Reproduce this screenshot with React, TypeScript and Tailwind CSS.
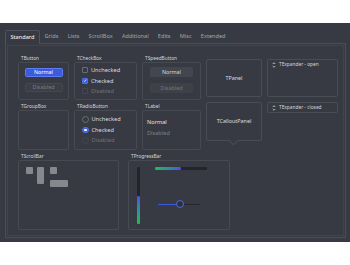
import type { ReactNode } from "react";

const tabs = ["Standard", "Grids", "Lists", "ScrollBox", "Additional", "Edits", "Misc", "Extended"];

function Group({ label, h, w, children }: { label: string; h: number; w: number; children?: ReactNode }) {
  return (
    <div style={{ width: w }} className="flex flex-col">
      <div className="h-[7px] pl-[3px] text-[4.8px] leading-[6px] text-[#d6d7da]">{label}</div>
      <div style={{ height: h }} className="rounded-[2px] border border-[#474a52]">
        {children}
      </div>
    </div>
  );
}

function Check({ label, checked, disabled }: { label: string; checked?: boolean; disabled?: boolean }) {
  return (
    <div className="flex h-[10.5px] items-center gap-[3px]">
      <span
        className={`flex h-[6px] w-[6px] items-center justify-center rounded-[1px] border ${
          checked ? "border-[#4f6fe6] bg-[#3d5fe0]" : disabled ? "border-[#44474e]" : "border-[#6a6d74]"
        }`}
      >
        {checked && (
          <svg width="5" height="5" viewBox="0 0 10 10">
            <path d="M2 5.5 L4.2 7.5 L8 2.5" stroke="white" strokeWidth="1.8" fill="none" />
          </svg>
        )}
      </span>
      <span className={`text-[5.6px] ${disabled ? "text-[#6f7278]" : "text-[#dcdde0]"}`}>{label}</span>
    </div>
  );
}

function Radio({ label, checked, disabled }: { label: string; checked?: boolean; disabled?: boolean }) {
  return (
    <div className="flex h-[10.5px] items-center gap-[3px]">
      <span
        className={`flex h-[6.5px] w-[6.5px] items-center justify-center rounded-full border ${
          checked ? "border-[#4f6fe6] bg-[#3d5fe0]" : disabled ? "border-[#44474e]" : "border-[#6a6d74]"
        }`}
      >
        {checked && <span className="h-[2.5px] w-[2.5px] rounded-full bg-white" />}
      </span>
      <span className={`text-[5.6px] ${disabled ? "text-[#6f7278]" : "text-[#dcdde0]"}`}>{label}</span>
    </div>
  );
}

// up/down chevrons used as expander toggle
function UpDown() {
  return (
    <svg width="4" height="6" viewBox="0 0 4 6" className="shrink-0">
      <path d="M0.7 2 L2 0.7 L3.3 2 M0.7 4 L2 5.3 L3.3 4" stroke="#d6d7da" strokeWidth="0.8" fill="none" />
    </svg>
  );
}

function Expander({ label, h }: { label: string; h: number }) {
  return (
    <div style={{ height: h }} className="rounded-[2px] border border-[#4a4d55] pl-[4px]">
      <div className="flex h-[9px] items-center gap-[3px] text-[4.8px] text-[#d6d7da]">
        <UpDown />
        <span>{label}</span>
      </div>
    </div>
  );
}

export default function App() {
  return (
    <div
      className="h-[265px] w-[350px] bg-white pt-[23px]"
      style={{ fontFamily: '"Noto Sans", "Open Sans", sans-serif' }}
    >
      <div className="h-[219px] bg-[#373a43] px-[5px] pt-[6px]">
        <div className="flex h-[14px] items-end">
          {tabs.map((t, i) =>
            i === 0 ? (
              <div
                key={t}
                className="relative z-10 -mb-px flex h-[14px] items-center rounded-t-[2px] border border-b-0 border-[#50535b] bg-[#373a43] px-[4.5px] text-[5.6px] text-white"
              >
                {t}
              </div>
            ) : (
              <div key={t} className="flex h-[13px] items-center px-[4.6px] text-[5.6px] text-[#a3a6ab]">
                {t}
              </div>
            )
          )}
        </div>
        <div className="h-[195px] w-[341px] border border-[#4b4e56] p-[1px]">
          <div className="h-full border border-[#41444c] pl-[10px] pt-[9px]">
            <div className="flex gap-[5px]">
              <div className="grid grid-cols-[51px_63px_59px] gap-x-[5px] gap-y-[3px]">
                <Group label="TButton" w={51} h={38}>
                  <div className="flex flex-col items-center pt-[5px]">
                    <div className="flex h-[9px] w-[38px] items-center justify-center rounded-[1.5px] border border-[#5d7cf0] bg-[#3b5bdc] text-[5.4px] text-white">
                      Normal
                    </div>
                    <div className="mt-[6px] flex h-[9px] w-[38px] items-center justify-center rounded-[1.5px] border border-[#45484f] bg-[#3c3f47] text-[5.4px] text-[#7a7d83]">
                      Disabled
                    </div>
                  </div>
                </Group>
                <Group label="TCheckBox" w={63} h={38}>
                  <div className="flex flex-col pl-[7px] pt-[2px]">
                    <Check label="Unchecked" />
                    <Check label="Checked" checked />
                    <Check label="Disabled" disabled />
                  </div>
                </Group>
                <Group label="TSpeedButton" w={59} h={38}>
                  <div className="flex flex-col items-center pt-[4px]">
                    <div className="flex h-[10px] w-[43px] items-center justify-center rounded-[1.5px] bg-[#43464e] text-[5.4px] text-[#d8d9dc]">
                      Normal
                    </div>
                    <div className="mt-[6px] flex h-[10px] w-[43px] items-center justify-center rounded-[1.5px] bg-[#3e4148] text-[5.4px] text-[#74777d]">
                      Disabled
                    </div>
                  </div>
                </Group>
                <Group label="TGroupBox" w={51} h={40} />
                <Group label="TRadioButton" w={63} h={40}>
                  <div className="flex flex-col pl-[7px] pt-[3px]">
                    <Radio label="Unchecked" />
                    <Radio label="Checked" checked />
                    <Radio label="Disabled" disabled />
                  </div>
                </Group>
                <Group label="TLabel" w={59} h={40}>
                  <div className="flex flex-col pl-[4px] pt-[6px] text-[5.6px] leading-[10.5px]">
                    <span className="text-[#e2e3e6]">Normal</span>
                    <span className="text-[#7e8187]">Disabled</span>
                  </div>
                </Group>
              </div>
              <div className="flex w-[56px] flex-col gap-[5px] pt-[4px]">
                <div className="flex h-[38px] items-center justify-center rounded-[2px] border border-[#4a4d55] text-[5.4px] text-[#dcdde0]">
                  TPanel
                </div>
                <div className="relative flex h-[39px] items-center justify-center rounded-[2px] border border-[#4a4d55] text-[5.4px] text-[#dcdde0]">
                  TCalloutPanel
                  <span className="absolute bottom-[-4px] left-[23px] h-[7px] w-[7px] rotate-45 border-b border-r border-[#4a4d55] bg-[#373a43]" />
                </div>
              </div>
              <div className="flex w-[71px] flex-col gap-[5px] pt-[4px]">
                <Expander label="TExpander - open" h={38} />
                <Expander label="TExpander - closed" h={11} />
              </div>
            </div>
            <div className="mt-[3px] flex gap-[9px]">
              <Group label="TScrollBar" w={101} h={70}>
                <div className="flex pl-[7px] pt-[6px]">
                  <div className="h-[7px] w-[7px] rounded-[1px] bg-[#86888d]" />
                  <div className="ml-[4px] h-[17px] w-[7px] rounded-[1px] bg-[#86888d]" />
                  <div className="ml-[6px] flex flex-col">
                    <div className="h-[7px] w-[7px] rounded-[1px] bg-[#86888d]" />
                    <div className="mt-[6px] h-[7px] w-[18px] rounded-[1px] bg-[#86888d]" />
                  </div>
                </div>
              </Group>
              <Group label="TProgressBar" w={102} h={70}>
                <div className="flex pl-[8px] pt-[6px]">
                  <div className="flex h-[57px] w-[3px] flex-col justify-end rounded-[1px] bg-[#23252a]">
                    <div className="h-[28px] w-full rounded-[1px] bg-gradient-to-b from-[#4650d8] to-[#1fbf3f]" />
                  </div>
                  <div className="ml-[15px] flex flex-col">
                    <div className="h-[3px] w-[52px] rounded-[1px] bg-[#23252a]">
                      <div className="h-full w-[26px] rounded-[1px] bg-gradient-to-r from-[#1fbf3f] to-[#4650d8]" />
                    </div>
                    <div className="ml-[3px] mt-[30px] flex h-[8px] w-[42px] items-center">
                      <div className="h-px w-[18px] bg-[#3b5bdc]" />
                      <div className="h-[7.5px] w-[7.5px] rounded-full border border-[#4a6ae6] bg-[#2e3038]" />
                      <div className="h-px flex-1 bg-[#25272c]" />
                    </div>
                  </div>
                </div>
              </Group>
            </div>
          </div>
        </div>
      </div>
    </div>
  );
}
